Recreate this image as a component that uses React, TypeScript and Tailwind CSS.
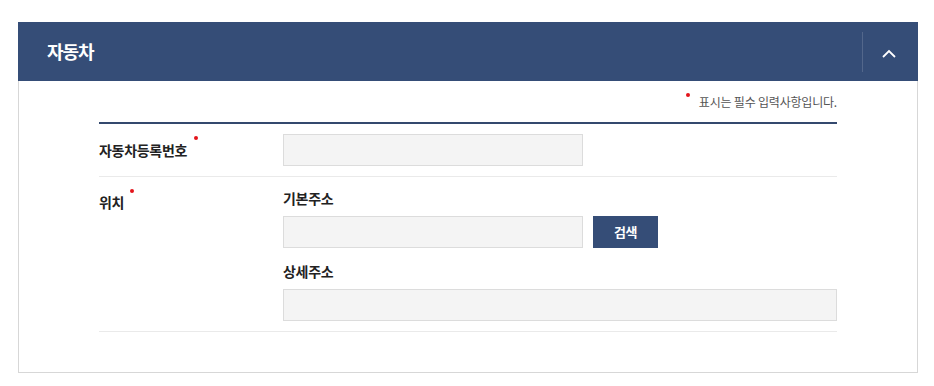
import React from 'react';

const RequiredDot: React.FC<{ className?: string }> = ({ className = '' }) => (
    <span className={`inline-block w-[4px] h-[4px] rounded-full bg-[#e3141b] ${className}`} aria-hidden="true"></span>
);

const FieldBox: React.FC<{ className?: string }> = ({ className = '' }) => (
    <input type="text" className={`h-[32px] bg-[#f4f4f4] border border-[#dcdcdc] outline-none px-3 text-[14px] ${className}`} />
);

const App: React.FC = () => {
    return (
        <div className="min-h-[386px] bg-white pt-[22px] font-['Noto_Sans_CJK_KR','Noto_Sans',sans-serif]">
            <section className="ml-[18px] w-[900px]">
                <header className="flex h-[59px] items-center bg-[#354d77]">
                    <h2 className="flex-1 pl-[29px] text-[18px] font-bold tracking-[-1px] text-white">자동차</h2>
                    <div className="h-[40px] w-px bg-white/15"></div>
                    <button className="flex h-full w-[55px] items-center justify-center pr-[4px] pt-[3px]" aria-label="접기">
                        <svg width="14" height="9" viewBox="0 0 14 9" fill="none">
                            <polyline points="1,8 7,2 13,8" stroke="white" strokeWidth="1.8" />
                        </svg>
                    </button>
                </header>

                <div className="border border-t-0 border-[#d7d7d7] px-[80px] pt-[13px] pb-[40px]">
                    <p className="flex h-[16px] items-center justify-end text-[12px] tracking-[-0.2px] text-[#555]">
                        <RequiredDot className="relative -top-[7px] mr-[9px]" />
                        표시는 필수 입력사항입니다.
                    </p>

                    <div className="mt-[12px] border-t-2 border-[#34496e]">
                        <div className="flex items-center border-b border-[#eaeaea] py-[10px]">
                            <div className="w-[184px] text-[14px] font-bold tracking-[-0.3px] text-[#222]">
                                자동차등록번호
                                <RequiredDot className="relative -top-[4px] ml-[7px] align-top" />
                            </div>
                            <FieldBox className="w-[300px]" />
                        </div>

                        <div className="flex border-b border-[#eaeaea] pt-[11px] pb-[10px]">
                            <div className="w-[184px] pt-[4px] text-[14px] font-bold leading-[20px] tracking-[-0.3px] text-[#222]">
                                위치
                                <RequiredDot className="relative -top-[3px] ml-[6px] align-top" />
                            </div>
                            <div className="flex-1">
                                <div className="text-[14px] font-bold leading-[20px] tracking-[-0.3px] text-[#222]">기본주소</div>
                                <div className="mt-[8px] flex items-center gap-[10px]">
                                    <FieldBox className="w-[300px]" />
                                    <button className="h-[32px] w-[65px] bg-[#354d77] text-[13px] font-bold tracking-[-0.5px] text-white">검색</button>
                                </div>
                                <div className="mt-[13px] text-[14px] font-bold leading-[20px] tracking-[-0.3px] text-[#222]">상세주소</div>
                                <FieldBox className="mt-[8px] w-full" />
                            </div>
                        </div>
                    </div>
                </div>
            </section>
        </div>
    );
};

export default App;
